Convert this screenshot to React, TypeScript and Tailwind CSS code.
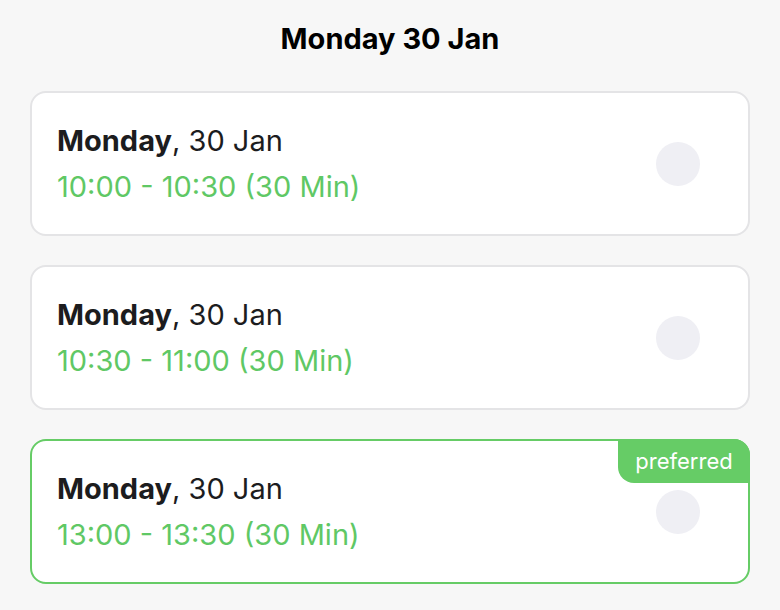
const slots = [
  { time: "10:00 - 10:30 (30 Min)", preferred: false },
  { time: "10:30 - 11:00 (30 Min)", preferred: false },
  { time: "13:00 - 13:30 (30 Min)", preferred: true },
];

const SlotCard = ({ time, preferred }: { time: string; preferred: boolean }) => (
  <div
    className={`relative flex h-[145px] items-center justify-between rounded-[16px] bg-white pl-[25px] pr-[48px] ${
      preferred ? "border-2 border-[#66cc66]" : "border-2 border-[#e4e4e6]"
    }`}
  >
    <div className="flex flex-col gap-[8px] text-[29px] leading-[38px]">
      <p className="text-[#1c1c1e]">
        <span className="font-bold">Monday</span>, 30 Jan
      </p>
      <p className="text-[#5fc865]">{time}</p>
    </div>
    <div className="h-[44px] w-[44px] rounded-full bg-[#efeff4]" />
    {preferred && (
      <span className="absolute right-[-2px] top-[-2px] flex h-[44px] w-[132px] items-center justify-center rounded-bl-[16px] rounded-tr-[16px] bg-[#66cc66] text-[22px] text-white">
        preferred
      </span>
    )}
  </div>
);

export default function App() {
  return (
    <div
      className="min-h-[610px] bg-[#f7f7f7] px-[30px]"
      style={{ fontFamily: "Inter, 'Noto Sans', sans-serif" }}
    >
      <h1 className="pt-[20px] pb-[34px] text-center text-[29px] leading-[37px] font-bold text-black">
        Monday 30 Jan
      </h1>
      <div className="flex flex-col gap-[29px]">
        {slots.map((s) => (
          <SlotCard key={s.time} time={s.time} preferred={s.preferred} />
        ))}
      </div>
    </div>
  );
}
